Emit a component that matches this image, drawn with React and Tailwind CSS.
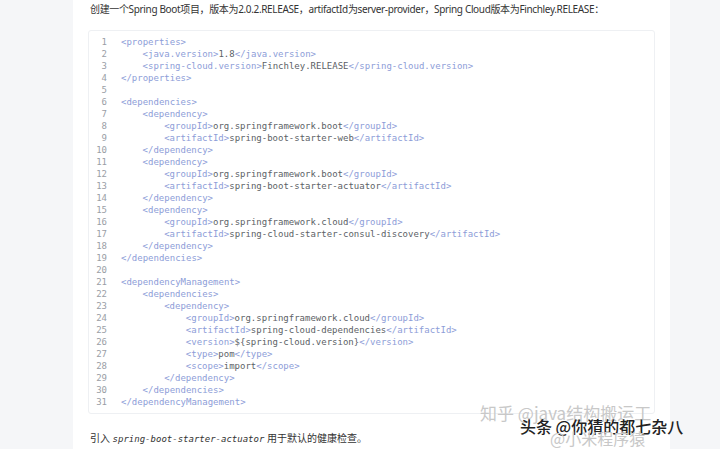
import React from "react";

const T = ({ children }) => <span className="text-[#8d9dd8]">{children}</span>;

const lines = [
  [0, <><T>&lt;properties&gt;</T></>],
  [1, <><T>&lt;java.version&gt;</T>1.8<T>&lt;/java.version&gt;</T></>],
  [1, <><T>&lt;spring-cloud.version&gt;</T>Finchley.RELEASE<T>&lt;/spring-cloud.version&gt;</T></>],
  [0, <><T>&lt;/properties&gt;</T></>],
  [0, null],
  [0, <><T>&lt;dependencies&gt;</T></>],
  [1, <><T>&lt;dependency&gt;</T></>],
  [2, <><T>&lt;groupId&gt;</T>org.springframework.boot<T>&lt;/groupId&gt;</T></>],
  [2, <><T>&lt;artifactId&gt;</T>spring-boot-starter-web<T>&lt;/artifactId&gt;</T></>],
  [1, <><T>&lt;/dependency&gt;</T></>],
  [1, <><T>&lt;dependency&gt;</T></>],
  [2, <><T>&lt;groupId&gt;</T>org.springframework.boot<T>&lt;/groupId&gt;</T></>],
  [2, <><T>&lt;artifactId&gt;</T>spring-boot-starter-actuator<T>&lt;/artifactId&gt;</T></>],
  [1, <><T>&lt;/dependency&gt;</T></>],
  [1, <><T>&lt;dependency&gt;</T></>],
  [2, <><T>&lt;groupId&gt;</T>org.springframework.cloud<T>&lt;/groupId&gt;</T></>],
  [2, <><T>&lt;artifactId&gt;</T>spring-cloud-starter-consul-discovery<T>&lt;/artifactId&gt;</T></>],
  [1, <><T>&lt;/dependency&gt;</T></>],
  [0, <><T>&lt;/dependencies&gt;</T></>],
  [0, null],
  [0, <><T>&lt;dependencyManagement&gt;</T></>],
  [1, <><T>&lt;dependencies&gt;</T></>],
  [2, <><T>&lt;dependency&gt;</T></>],
  [3, <><T>&lt;groupId&gt;</T>org.springframework.cloud<T>&lt;/groupId&gt;</T></>],
  [3, <><T>&lt;artifactId&gt;</T>spring-cloud-dependencies<T>&lt;/artifactId&gt;</T></>],
  [3, <><T>&lt;version&gt;</T>${"{spring-cloud.version}"}<T>&lt;/version&gt;</T></>],
  [3, <><T>&lt;type&gt;</T>pom<T>&lt;/type&gt;</T></>],
  [3, <><T>&lt;scope&gt;</T>import<T>&lt;/scope&gt;</T></>],
  [2, <><T>&lt;/dependency&gt;</T></>],
  [1, <><T>&lt;/dependencies&gt;</T></>],
  [0, <><T>&lt;/dependencyManagement&gt;</T></>],
];

const indentCls = ["pl-0", "pl-[21.6px]", "pl-[43.2px]", "pl-[64.8px]"];

export default function App() {
  return (
    <div className="relative flex h-[449px] w-[720px] overflow-hidden bg-[#f5f6f8]" style={{ fontFamily: "'Noto Sans', 'Noto Sans CJK SC', sans-serif" }}>
      <div className="w-[73px] shrink-0" />
      <div className="w-[597px] shrink-0 bg-white pl-[17px] pt-[1px]">
        <p className="h-[18px] text-[10px] leading-[16px] tracking-[-0.35px] text-[#333]">
          创建一个Spring Boot项目，版本为2.0.2.RELEASE，artifactId为server-provider，Spring Cloud版本为Finchley.RELEASE：
        </p>
        <div className="ml-[-2px] mt-[11px] w-[567px] rounded-[3px] border border-[#eef0f3] bg-white py-[5px]" style={{ fontFamily: "'DejaVu Sans Mono', monospace" }}>
          {lines.map(([ind, content], i) => (
            <div key={i} className="flex h-[12px] text-[9px] leading-[12px] text-[#5c5f66]">
              <span className="w-[18px] shrink-0 text-right text-[#9a9ea6]">{i + 1}</span>
              <span className={"ml-[14px] whitespace-pre " + indentCls[ind]}>{content}</span>
            </div>
          ))}
        </div>
        <p className="mt-[16px] text-[10px] leading-[16px] text-[#333]">
          引入 <i style={{ fontFamily: "'DejaVu Sans Mono', monospace" }} className="text-[9px]">spring-boot-starter-actuator</i> 用于默认的健康检查。
        </p>
      </div>
      <div className="flex-1" />
      <div className="pointer-events-none absolute left-[480px] top-[403px] text-[17px] leading-[20px] text-[#c8c8c8]" style={{ fontFamily: "'Noto Sans CJK SC', sans-serif" }}>
        知乎 @java结构搬运工
      </div>
      <div className="pointer-events-none absolute left-[520px] top-[416px] text-[16px] font-medium leading-[20px] text-[#222]" style={{ fontFamily: "'Noto Sans CJK SC', sans-serif" }}>
        头条 @你猜的都七杂八
      </div>
      <div className="pointer-events-none absolute left-[550px] top-[428px] text-[16px] leading-[20px] text-[#c8c8c8]" style={{ fontFamily: "'Noto Sans CJK SC', sans-serif" }}>
        @小米程序猿
      </div>
    </div>
  );
}
